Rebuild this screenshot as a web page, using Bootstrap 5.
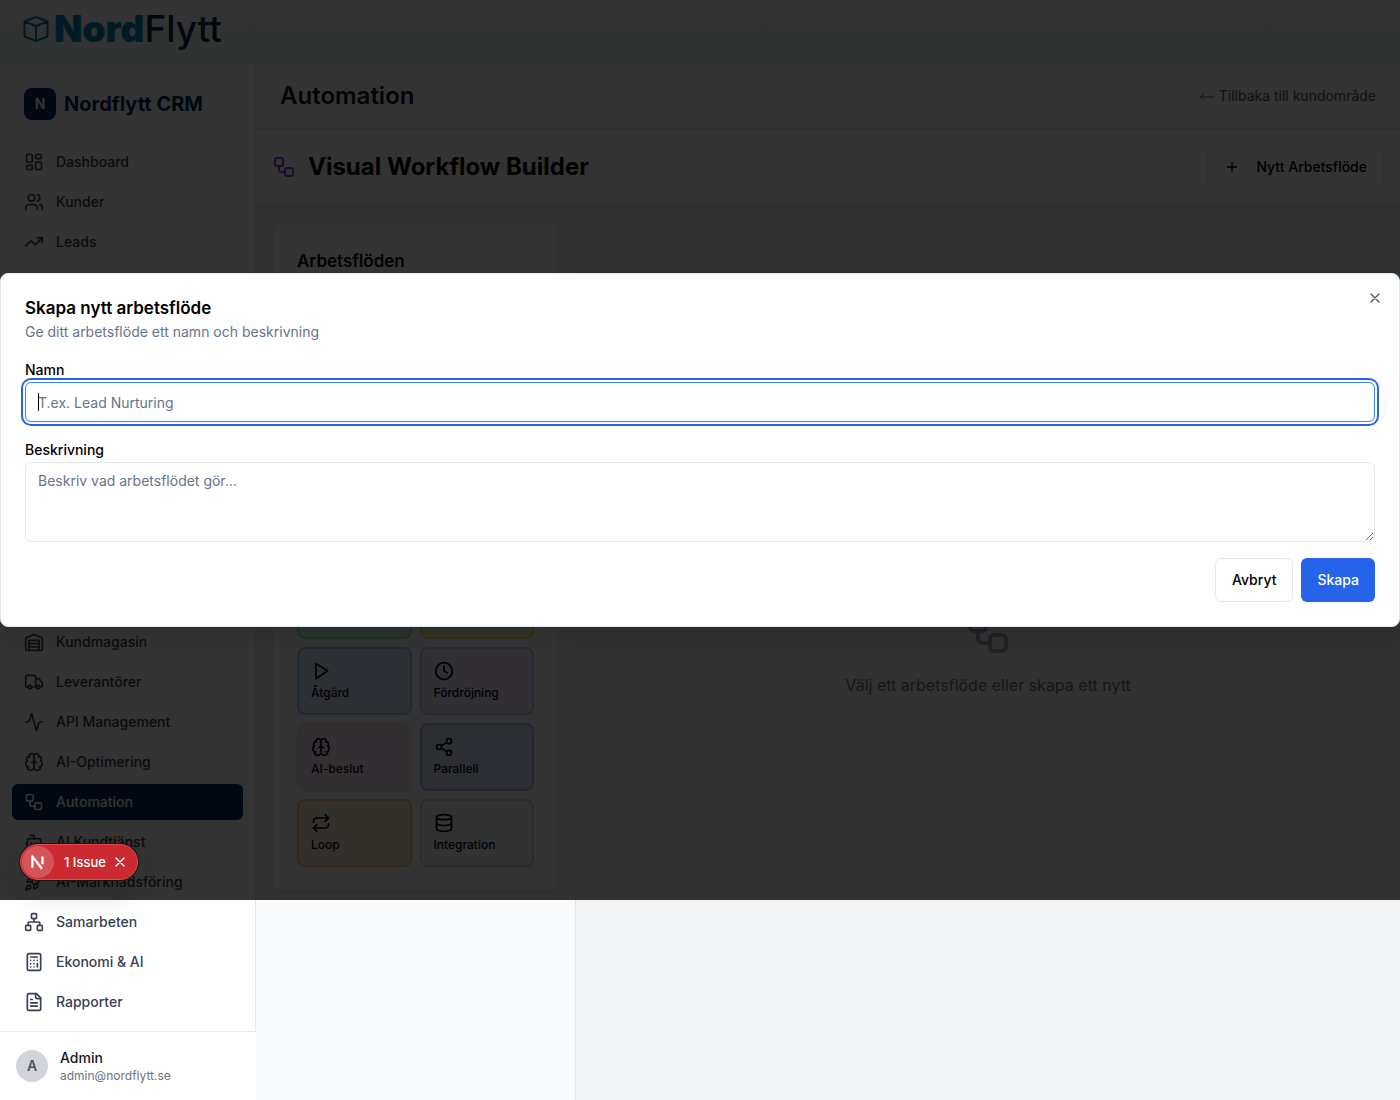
<!DOCTYPE html>
<html lang="sv">
<head>
<meta charset="utf-8">
<meta name="viewport" content="width=device-width, initial-scale=1">
<title>Automation – Nordflytt CRM</title>
<link href="https://cdn.jsdelivr.net/npm/bootstrap@5.3.0/dist/css/bootstrap.min.css" rel="stylesheet">
<style>
  :root { --line: #e5e7eb; --navy: #002a5c; --overlay-h: 900px; }
  body { font-family: Inter, "Liberation Sans", sans-serif; font-size: 16px; line-height: 24px; color: #020817; background: #fff; }
  svg { fill: none; stroke: currentColor; stroke-width: 2; stroke-linecap: round; stroke-linejoin: round; flex: none; display: block; }
  .i16 { width: 16px; height: 16px; }
  .i20 { width: 20px; height: 20px; }
  .i24 { width: 24px; height: 24px; }
  .i48 { width: 48px; height: 48px; }
  .shell { min-height: 100vh; }
  .topbar { height: 64px; padding: 0 23px 6px; background: linear-gradient(#fbfdfd, #f0f9f8); }
  .brand { gap: 5px; line-height: 40px; font-size: 37px; text-decoration: none; }
  .brand svg { width: 26px; height: 28px; color: #0a7fb0; }
  .brand-a { font-weight: 900; color: #0086bd; }
  .brand-b { font-weight: 500; color: #0b2b3a; }
  .side { width: 256px; flex: none; }
  .side-main { border-right: 1px solid var(--line); border-bottom: 1px solid var(--line); padding-bottom: 11px; }
  .side-logo { width: 32px; height: 32px; border-radius: 8px; background: var(--navy); color: #fff; font-size: 14px; font-weight: 700; }
  .side-name { font-size: 20px; line-height: 28px; font-weight: 700; color: var(--navy); }
  .side-nav { gap: 4px; padding: 0 12px; }
  .side-nav .nav-link { display: flex; align-items: center; gap: 12px; height: 36px; padding: 0 12px; border-radius: 6px; font-size: 14px; line-height: 20px; font-weight: 500; color: #374151; }
  .side-nav .nav-link.active { background: var(--navy); color: #fff; }
  .user { padding: 16px; gap: 12px; }
  .avatar { width: 32px; height: 32px; border-radius: 50%; background: #d1d5db; color: #4b5563; font-size: 14px; font-weight: 600; }
  .user-name { font-size: 14px; line-height: 20px; font-weight: 500; color: #111827; }
  .user-mail { font-size: 12px; line-height: 16px; color: #6b7280; }
  .page-head { height: 65px; padding: 0 24px; border-bottom: 1px solid var(--line); }
  .page-head h1 { font-size: 24px; line-height: 32px; font-weight: 600; color: #111827; }
  .page-head a { gap: 4px; font-size: 14px; line-height: 20px; color: #4b5563; text-decoration: none; }
  .page-head a svg { stroke-width: 1; }
  .tool-head { padding: 16px; border-bottom: 1px solid var(--line); }
  .tool-head h2 { font-size: 24px; line-height: 32px; font-weight: 700; color: #000; }
  .tool-head svg.i24 { color: #9333ea; }
  .btn-box { display: inline-flex; align-items: center; height: 44px; padding: 0 16px; border-radius: 6px; font-size: 14px; line-height: 20px; font-weight: 500; color: #000; background: #fff; border: 1px solid #e2e8f0; }
  .btn-box.btn-fill { background: #2563eb; border: 0; color: #fff; }
  .palette { width: 320px; flex: none; padding: 16px; background: #f9fafb; border-right: 1px solid #e2e8f0; }
  .flow-card { min-height: 670px; padding: 24px; border: 1px solid #e2e8f0; border-radius: 8px; background: #fff; box-shadow: 0 1px 2px rgba(0,0,0,.05); }
  .flow-card h3 { font-size: 17px; line-height: 28px; font-weight: 600; }
  .tiles { display: grid; grid-template-columns: 1fr 1fr; gap: 8px; }
  .tile { min-height: 68px; padding: 12px; border: 2px solid; border-radius: 8px; text-align: left; font-size: 12px; line-height: 16px; font-weight: 500; color: #020817; }
  .tile svg { margin-bottom: 4px; }
  .t-green { background: #dcfce7; border-color: #86efac; }
  .t-yellow { background: #fef9c3; border-color: #fde047; }
  .t-blue { background: #dbeafe; border-color: #93c5fd; }
  .t-purple { background: #f3e8ff; border-color: #d8b4fe; }
  .t-pink { background: #fce7f3; border-color: #e2e8f0; }
  .t-indigo { background: #e0e7ff; border-color: #a5b4fc; }
  .t-orange { background: #ffedd5; border-color: #fdba74; }
  .t-gray { background: #f9fafb; border-color: #d1d5db; }
  .canvas { background: #f3f4f6; color: #6b7280; }
  .canvas svg { color: #9ca3af; }
  .overlay { position: absolute; top: 0; left: 0; right: 0; height: var(--overlay-h); background: rgba(0,0,0,.8); }
  .dlg { position: relative; width: 100%; padding: 24px; border: 1px solid #e2e8f0; border-radius: 8px; background: #fff; color: #020817; box-shadow: 0 10px 15px -3px rgba(0,0,0,.1); }
  .dlg h2 { font-size: 17px; line-height: 20px; font-weight: 600; margin-bottom: 4px; color: #000; }
  .dlg p { font-size: 14px; line-height: 20px; color: #64748b; }
  .dlg label { display: block; font-size: 14px; line-height: 24px; font-weight: 500; color: #000; }
  .dlg .form-control { font-size: 14px; line-height: 20px; padding: 8px 12px; border: 1px solid #e2e8f0; border-radius: 6px; }
  .dlg .form-control::placeholder { color: #64748b; }
  .dlg input.form-control { height: 40px; border-color: #3b82f6; box-shadow: 0 0 0 2px #fff, 0 0 0 4px #2563eb; caret-color: transparent; }
  .dlg textarea.form-control { height: 80px; min-height: 80px; }
  .caret { position: absolute; left: 13px; top: 11px; width: 1px; height: 18px; background: #000; }
  .dlg-x { position: absolute; top: 16px; right: 16px; padding: 0; border: 0; background: none; color: #555; }
  .issue { position: absolute; left: 20px; top: 844px; height: 36px; padding: 0 9px 0 1px; border-radius: 18px; background: #ca2a30; border: 1px solid #e5484d; color: #fff; font-size: 13px; line-height: 18px; font-weight: 500; box-shadow: 0 0 0 1px #171717, 0 16px 32px -8px rgba(0,0,0,.24); }
  .issue-n { width: 32px; height: 32px; border-radius: 50%; background: rgba(255,255,255,.2); margin-right: 10px; }
  .issue-n svg { width: 18px; height: 18px; }
  .issue button { border: 0; background: none; padding: 0; color: #fff; margin-left: 6px; }
</style>
</head>
<body>
<svg class="d-none" aria-hidden="true">
  <symbol id="workflow" viewBox="0 0 24 24"><rect width="8" height="8" x="3" y="3" rx="2"/><path d="M7 11v4a2 2 0 0 0 2 2h4"/><rect width="8" height="8" x="13" y="13" rx="2"/></symbol>
  <symbol id="brain" viewBox="0 0 24 24"><path d="M12 5a3 3 0 1 0-5.997.125 4 4 0 0 0-2.526 5.77 4 4 0 0 0 .556 6.588A4 4 0 1 0 12 18Z"/><path d="M12 5a3 3 0 1 1 5.997.125 4 4 0 0 1 2.526 5.77 4 4 0 0 1-.556 6.588A4 4 0 1 1 12 18Z"/><path d="M15 13a4.500 4.500 0 0 1-3-4 4.500 4.500 0 0 1-3 4M17.599 6.500a3 3 0 0 0 .399-1.375M6.003 5.125A3 3 0 0 0 6.401 6.500M3.477 10.896a4 4 0 0 1 .585-.396M19.938 10.500a4 4 0 0 1 .585.396M6 18a4 4 0 0 1-1.967-.516M19.967 17.484A4 4 0 0 1 18 18"/></symbol>
  <symbol id="cross" viewBox="0 0 24 24"><path d="M18 6 6 18M6 6l12 12"/></symbol>
</svg>

<div class="shell d-flex flex-column">
  <header class="topbar d-flex align-items-center">
    <a href="#" class="brand d-flex align-items-center">
      <svg viewBox="0 0 26 28"><path d="M13 2 24.500 6.500v15L13 26 1.500 21.500v-15ZM1.500 6.500 13 11l11.500-4.500M13 11v15"/></svg>
      <span><span class="brand-a">Nord</span><span class="brand-b">Flytt</span></span>
    </a>
  </header>

  <div class="d-flex flex-grow-1">
    <aside class="side d-flex flex-column">
      <div class="side-main d-flex flex-column flex-grow-1">
        <div class="d-flex align-items-center gap-2 p-4">
          <span class="side-logo d-flex align-items-center justify-content-center">N</span>
          <span class="side-name">Nordflytt CRM</span>
        </div>
        <nav class="side-nav nav flex-column">
          <a class="nav-link" href="#"><svg class="i20" viewBox="0 0 24 24"><rect width="7" height="9" x="3" y="3" rx="1"/><rect width="7" height="5" x="14" y="3" rx="1"/><rect width="7" height="9" x="14" y="12" rx="1"/><rect width="7" height="5" x="3" y="16" rx="1"/></svg>Dashboard</a>
          <a class="nav-link" href="#"><svg class="i20" viewBox="0 0 24 24"><path d="M16 21v-2a4 4 0 0 0-4-4H6a4 4 0 0 0-4 4v2"/><circle cx="9" cy="7" r="4"/><path d="M22 21v-2a4 4 0 0 0-3-3.870M16 3.130a4 4 0 0 1 0 7.750"/></svg>Kunder</a>
          <a class="nav-link" href="#"><svg class="i20" viewBox="0 0 24 24"><path d="m22 7-8.500 8.500-5-5L2 17"/><path d="M16 7h6v6"/></svg>Leads</a>
        </nav>
        <nav class="side-nav nav flex-column mt-auto">
          <a class="nav-link" href="#"><svg class="i20" viewBox="0 0 24 24"><path d="M22 8.350V20a2 2 0 0 1-2 2H4a2 2 0 0 1-2-2V8.350A2 2 0 0 1 3.260 6.500l8-3.200a2 2 0 0 1 1.480 0l8 3.200A2 2 0 0 1 22 8.350ZM6 18h12M6 14h12"/><path d="M6 22V10h12v12"/></svg>Kundmagasin</a>
          <a class="nav-link" href="#"><svg class="i20" viewBox="0 0 24 24"><path d="M14 18V6a2 2 0 0 0-2-2H4a2 2 0 0 0-2 2v11a1 1 0 0 0 1 1h2M15 18H9M19 18h2a1 1 0 0 0 1-1v-3.650a1 1 0 0 0-.22-.624l-3.480-4.350A1 1 0 0 0 17.520 8H14"/><circle cx="17" cy="18" r="2"/><circle cx="7" cy="18" r="2"/></svg>Leverantörer</a>
          <a class="nav-link" href="#"><svg class="i20" viewBox="0 0 24 24"><path d="M22 12h-2.480a2 2 0 0 0-1.930 1.460l-2.350 8.360a.25.25 0 0 1-.48 0L9.240 2.180a.25.25 0 0 0-.48 0l-2.350 8.360A2 2 0 0 1 4.490 12H2"/></svg>API Management</a>
          <a class="nav-link" href="#"><svg class="i20"><use href="#brain"/></svg>AI-Optimering</a>
          <a class="nav-link active" href="#"><svg class="i20"><use href="#workflow"/></svg>Automation</a>
          <a class="nav-link" href="#"><svg class="i20" viewBox="0 0 24 24"><path d="M12 8V4H8"/><rect width="16" height="12" x="4" y="8" rx="2"/><path d="M2 14h2M20 14h2M15 13v2M9 13v2"/></svg>AI Kundtjänst</a>
          <a class="nav-link" href="#"><svg class="i20" viewBox="0 0 24 24"><path d="M4.500 16.500c-1.500 1.260-2 5-2 5s3.740-.5 5-2c.71-.84.7-2.130-.09-2.910a2.180 2.180 0 0 0-2.910-.09ZM12 15l-3-3a22 22 0 0 1 2-3.950A12.880 12.880 0 0 1 22 2c0 2.720-.78 7.500-6 11a22.350 22.350 0 0 1-4 2ZM9 12H4s.55-3.030 2-4c1.620-1.080 5 0 5 0M12 15v5s3.030-.55 4-2c1.080-1.620 0-5 0-5"/></svg>AI-Marknadsföring</a>
          <a class="nav-link" href="#"><svg class="i20" viewBox="0 0 24 24"><rect x="16" y="16" width="6" height="6" rx="1"/><rect x="2" y="16" width="6" height="6" rx="1"/><rect x="9" y="2" width="6" height="6" rx="1"/><path d="M5 16v-3a1 1 0 0 1 1-1h12a1 1 0 0 1 1 1v3M12 12V8"/></svg>Samarbeten</a>
          <a class="nav-link" href="#"><svg class="i20" viewBox="0 0 24 24"><rect width="16" height="20" x="4" y="2" rx="2"/><path d="M8 6h8M16 14v4M16 10h.01M12 10h.01M8 10h.01M12 14h.01M8 14h.01M12 18h.01M8 18h.01"/></svg>Ekonomi &amp; AI</a>
          <a class="nav-link" href="#"><svg class="i20" viewBox="0 0 24 24"><path d="M15 2H6a2 2 0 0 0-2 2v16a2 2 0 0 0 2 2h12a2 2 0 0 0 2-2V7Z"/><path d="M14 2v4a2 2 0 0 0 2 2h4M10 9H8M16 13H8M16 17H8"/></svg>Rapporter</a>
        </nav>
      </div>
      <div class="user d-flex align-items-center">
        <span class="avatar d-flex align-items-center justify-content-center">A</span>
        <div>
          <div class="user-name">Admin</div>
          <div class="user-mail">admin@nordflytt.se</div>
        </div>
      </div>
    </aside>

    <main class="d-flex flex-column flex-grow-1">
      <div class="page-head d-flex align-items-center justify-content-between">
        <h1 class="m-0">Automation</h1>
        <a href="#" class="d-flex align-items-center"><svg class="i16" viewBox="0 0 16 16"><path d="M15 9H1.500M5 5.500 1.500 9 5 12.500"/></svg>Tillbaka till kundområde</a>
      </div>
      <div class="tool-head d-flex align-items-center justify-content-between">
        <div class="d-flex align-items-center gap-2">
          <svg class="i24"><use href="#workflow"/></svg>
          <h2 class="m-0 ms-1">Visual Workflow Builder</h2>
        </div>
        <button type="button" class="btn-box gap-3"><svg class="i16" viewBox="0 0 24 24"><path d="M5 12h14M12 5v14"/></svg>Nytt Arbetsflöde</button>
      </div>
      <div class="d-flex flex-grow-1">
        <section class="palette">
          <div class="flow-card d-flex flex-column justify-content-between">
            <h3 class="m-0">Arbetsflöden</h3>
            <div class="tiles">
              <button type="button" class="tile t-green" aria-label="Trigger"></button>
              <button type="button" class="tile t-yellow" aria-label="Villkor"></button>
              <button type="button" class="tile t-blue"><svg class="i20" viewBox="0 0 24 24"><path d="m6 3 14 9-14 9Z"/></svg>Åtgärd</button>
              <button type="button" class="tile t-purple"><svg class="i20" viewBox="0 0 24 24"><circle cx="12" cy="12" r="10"/><path d="M12 6v6l4 2"/></svg>Fördröjning</button>
              <button type="button" class="tile t-pink"><svg class="i20"><use href="#brain"/></svg>AI-beslut</button>
              <button type="button" class="tile t-indigo"><svg class="i20" viewBox="0 0 24 24"><circle cx="18" cy="5" r="3"/><circle cx="6" cy="12" r="3"/><circle cx="18" cy="19" r="3"/><path d="m8.590 13.510 6.830 3.980M15.410 6.510l-6.820 3.980"/></svg>Parallell</button>
              <button type="button" class="tile t-orange"><svg class="i20" viewBox="0 0 24 24"><path d="m17 2 4 4-4 4"/><path d="M3 11v-1a4 4 0 0 1 4-4h14M7 22l-4-4 4-4"/><path d="M21 13v1a4 4 0 0 1-4 4H3"/></svg>Loop</button>
              <button type="button" class="tile t-gray"><svg class="i20" viewBox="0 0 24 24"><ellipse cx="12" cy="5" rx="9" ry="3"/><path d="M3 5v14a9 3 0 0 0 18 0V5M3 12a9 3 0 0 0 18 0"/></svg>Integration</button>
            </div>
          </div>
        </section>
        <section class="canvas flex-grow-1 d-flex flex-column align-items-center justify-content-center gap-3">
          <svg class="i48"><use href="#workflow"/></svg>
          <div>Välj ett arbetsflöde eller skapa ett nytt</div>
        </section>
      </div>
    </main>
  </div>
</div>

<div class="overlay d-flex align-items-center">
  <form class="dlg" role="dialog" aria-labelledby="dlg-title">
    <h2 id="dlg-title">Skapa nytt arbetsflöde</h2>
    <p class="mb-3">Ge ditt arbetsflöde ett namn och beskrivning</p>
    <label for="wf-name">Namn</label>
    <div class="position-relative mb-3">
      <input id="wf-name" type="text" class="form-control" placeholder="T.ex. Lead Nurturing">
      <span class="caret"></span>
    </div>
    <label for="wf-desc">Beskrivning</label>
    <textarea id="wf-desc" class="form-control mb-3" placeholder="Beskriv vad arbetsflödet gör..."></textarea>
    <div class="d-flex justify-content-end gap-2">
      <button type="button" class="btn-box">Avbryt</button>
      <button type="button" class="btn-box btn-fill">Skapa</button>
    </div>
    <button type="button" class="dlg-x" aria-label="Stäng"><svg class="i16"><use href="#cross"/></svg></button>
  </form>
</div>

<div class="issue d-flex align-items-center">
  <span class="issue-n d-flex align-items-center justify-content-center"><svg viewBox="0 0 16 16"><path d="M3 13V3l8.500 11M12 3v7" stroke-linecap="butt"/></svg></span>
  <span>1 Issue</span>
  <button type="button" aria-label="Stäng"><svg class="i16"><use href="#cross"/></svg></button>
</div>
<script src="https://cdn.jsdelivr.net/npm/bootstrap@5.3.0/dist/js/bootstrap.bundle.min.js"></script>
</body>
</html>
